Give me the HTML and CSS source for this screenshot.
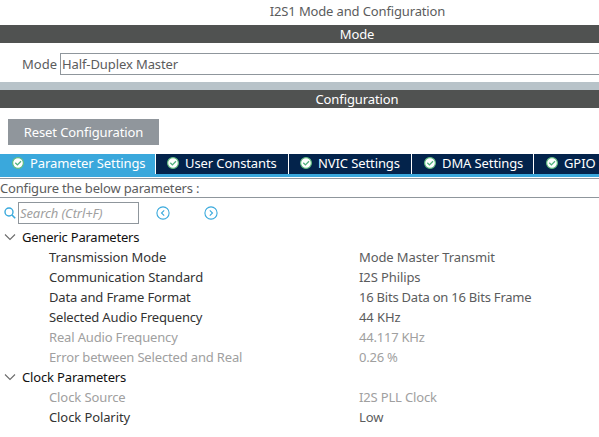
FILE: index.html
```
<!DOCTYPE html>
<html lang="en">
<head>
<meta charset="utf-8">
<title>I2S1 Mode and Configuration</title>
<link rel="stylesheet" href="styles.css">
</head>
<body>
<svg class="defs" width="0" height="0">
  <symbol id="check" viewBox="0 0 12 12">
    <circle cx="6" cy="6" r="5.4" fill="#fff" stroke="#62bd80" stroke-width="1.2"/>
    <path d="M3.3 5.8 5.4 7.9 9 4.2" fill="none" stroke="#4fb07c" stroke-width="1.3"/>
  </symbol>
  <symbol id="chevron" viewBox="0 0 12 8">
    <path d="M1 1.5 6 6.5 11 1.5" fill="none" stroke="#6b6b6b" stroke-width="1.1"/>
  </symbol>
</svg>
<main class="panel">
  <h1 class="title">I2S1 Mode and Configuration</h1>
  <h2 class="bar">Mode</h2>
  <div class="mode"><label>Mode</label><div class="combo">Half-Duplex Master</div></div>
  <div class="splitter"></div>
  <h2 class="bar">Configuration</h2>
  <button class="reset">Reset Configuration</button>
  <nav class="tabs">
    <div class="tab active t1"><svg><use href="#check"/></svg>Parameter Settings</div>
    <div class="tab t2"><svg><use href="#check"/></svg>User Constants</div>
    <div class="tab t3"><svg><use href="#check"/></svg>NVIC Settings</div>
    <div class="tab t4"><svg><use href="#check"/></svg>DMA Settings</div>
    <div class="tab t5"><svg><use href="#check"/></svg>GPIO Settings</div>
  </nav>
  <p class="hint">Configure the below parameters :</p>
  <div class="tools">
    <svg class="lens" viewBox="0 0 12 12"><circle cx="5" cy="5" r="4" fill="none" stroke="#39a9dc" stroke-width="1.4"/><path d="M8 8 11.2 11.2" stroke="#39a9dc" stroke-width="1.6"/></svg>
    <div class="search">Search (Ctrl+F)</div>
    <svg class="step prev" viewBox="0 0 14 14"><circle cx="7" cy="7" r="6.1"/><path d="M8.2 4.3 5.5 7 8.2 9.7"/></svg>
    <svg class="step next" viewBox="0 0 14 14"><circle cx="7" cy="7" r="6.1"/><path d="M5.8 4.3 8.5 7 5.8 9.7"/></svg>
  </div>
  <section>
    <div class="group tight"><svg><use href="#chevron"/></svg>Generic Parameters</div>
    <div class="row"><span>Transmission Mode</span><b>Mode Master Transmit</b></div>
    <div class="row"><span>Communication Standard</span><b>I2S Philips</b></div>
    <div class="row"><span class="snug">Data and Frame Format</span><b class="tight">16 Bits Data on 16 Bits Frame</b></div>
    <div class="row"><span class="snug">Selected Audio Frequency</span><b>44 KHz</b></div>
    <div class="row off"><span class="snug">Real Audio Frequency</span><b class="tight">44.117 KHz</b></div>
    <div class="row off"><span class="snug">Error between Selected and Real</span><b class="tight">0.26 %</b></div>
    <div class="group snug"><svg><use href="#chevron"/></svg>Clock Parameters</div>
    <div class="row off"><span>Clock Source</span><b class="snug">I2S PLL Clock</b></div>
    <div class="row"><span>Clock Polarity</span><b>Low</b></div>
  </section>
</main>
</body>
</html>
```
FILE: styles.css
```
* { box-sizing: border-box; }
html { overflow: hidden; }
body {
  margin: 0;
  width: 100%;
  height: 437px;
  overflow: hidden;
  background: #fff;
  color: #5b5c5d;
  font: 13px/20px "Noto Sans", sans-serif;
  letter-spacing: -0.1px;
  white-space: nowrap;
}
.snug { letter-spacing: -0.16px; }
.tight { letter-spacing: -0.22px; }
.defs { position: absolute; }
svg { display: block; flex: none; }
.panel { width: 714px; }
h1, h2, p { margin: 0; font-size: 13px; font-weight: 400; }
.title { height: 25px; padding-left: 1px; line-height: 23px; text-align: center; letter-spacing: -0.14px; }
.bar { height: 18px; line-height: 18px; text-align: center; background: #505251; color: #fff; }
.mode { display: flex; height: 39px; padding-top: 10px; line-height: 22px; }
.mode label { width: 60px; padding-left: 22px; letter-spacing: 0; }
.combo { flex: 1; height: 22px; padding-left: 1px; border: 1px solid #8f969c; line-height: 20px; }
.splitter { height: 8px; background: #b8c3c9; }
.reset {
  display: block;
  width: 151px;
  height: 26px;
  margin: 11px 0 9px 8px;
  padding: 0;
  border: 0;
  background: #90969c;
  color: #fff;
  font: 13px/26px "Noto Sans", sans-serif;
  letter-spacing: -0.1px;
}
.tabs { display: flex; gap: 1px; height: 23px; border-bottom: 3px solid #3aa8dc; }
.tab { display: flex; height: 20px; padding-left: 11px; background: #03234b; color: #fff; line-height: 19px; }
.tab svg { width: 12px; height: 12px; margin: 3px 6px 0 0; }
.active { height: 23px; background: #3aa8dc; }
.t1 { width: 155px; padding-left: 12px; }
.t2 { width: 132px; }
.t3 { width: 122px; }
.t4 { width: 121px; padding-left: 12px; }
.t5 { flex: 1; padding-left: 12px; }
.hint { height: 20px; margin-top: 1px; border: solid #8f969c; border-width: 1px 0; line-height: 19px; letter-spacing: -0.17px; }
.tools { display: flex; height: 29px; padding: 4px 0 0 4px; }
.lens { width: 12px; height: 12px; margin: 5px 2px 0 0; }
.search { width: 121px; height: 22px; padding-left: 1px; border: 1px solid #8f969c; color: #a0a0a0; font-style: italic; line-height: 20px; }
.step { width: 14px; height: 14px; margin-top: 4px; fill: none; stroke: #39a9dc; stroke-width: 1.1; }
.prev { margin-left: 17px; }
.next { margin-left: 34px; }
.group { display: flex; height: 20px; padding-left: 4px; color: #111; }
.group svg { width: 12px; height: 8px; margin: 6px 6px 0 0; }
.row { display: flex; height: 20px; padding-left: 49px; }
.row span { width: 310px; color: #333; }
.row b { font-weight: 400; }
.row.off, .row.off span { color: #a0a0a0; }
```
